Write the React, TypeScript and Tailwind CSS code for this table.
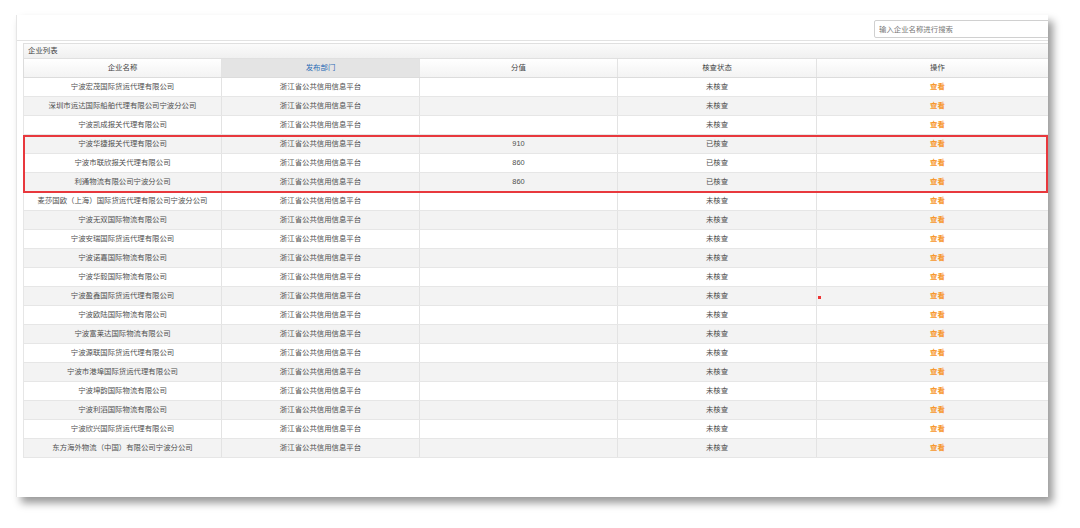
import React from 'react';

interface Company {
  name: string;
  score?: string;
  checked: boolean;
}

const companies: Company[] = [
  { name: '宁波宏茂国际货运代理有限公司', checked: false },
  { name: '深圳市运达国际船舶代理有限公司宁波分公司', checked: false },
  { name: '宁波凯成报关代理有限公司', checked: false },
  { name: '宁波华捷报关代理有限公司', score: '910', checked: true },
  { name: '宁波市联欣报关代理有限公司', score: '860', checked: true },
  { name: '利通物流有限公司宁波分公司', score: '860', checked: true },
  { name: '麦莎国欧（上海）国际货运代理有限公司宁波分公司', checked: false },
  { name: '宁波无双国际物流有限公司', checked: false },
  { name: '宁波安瑞国际货运代理有限公司', checked: false },
  { name: '宁波诺嘉国际物流有限公司', checked: false },
  { name: '宁波华毅国际物流有限公司', checked: false },
  { name: '宁波盈鑫国际货运代理有限公司', checked: false },
  { name: '宁波欧陆国际物流有限公司', checked: false },
  { name: '宁波富莱达国际物流有限公司', checked: false },
  { name: '宁波源联国际货运代理有限公司', checked: false },
  { name: '宁波市港埠国际货运代理有限公司', checked: false },
  { name: '宁波坤韵国际物流有限公司', checked: false },
  { name: '宁波利滔国际物流有限公司', checked: false },
  { name: '宁波欣兴国际货运代理有限公司', checked: false },
  { name: '东方海外物流（中国）有限公司宁波分公司', checked: false },
];

const cols = 'grid grid-cols-[198px_198px_198px_199px_242px]';
const cell = 'flex items-center justify-center border-r border-[#e3e3e3] whitespace-nowrap';

const App: React.FC = () => {
  return (
    <div
      className="w-[1080px] h-[528px] bg-white pt-[15px] pl-[16px] text-[7.4px] text-[#4f4f4f]"
      style={{ fontFamily: '"Liberation Sans", "Noto Sans CJK SC", sans-serif' }}
    >
      <div className="w-[1032px] h-[482px] bg-white flex flex-col overflow-hidden shadow-[5px_6px_8px_rgba(0,0,0,0.4)] border-l border-[#e6e6e6]">
        {/* top bar with search */}
        <div className="h-[26px] flex items-start pt-[5px] border-b border-[#e2e2e2]">
          <input
            placeholder="输入企业名称进行搜索"
            className="ml-[857px] w-[184px] h-[18px] shrink-0 border border-[#d0d0d0] rounded-[2px] px-[4px] text-[7.4px] text-[#555] placeholder:text-[#777] outline-none"
          />
        </div>

        {/* list area */}
        <div className="flex-1 flex -ml-px border-l border-[#8fcdf0] pl-[6px] pt-[2px]">
          <div className="relative w-[1040px]">
            <div className="h-[16px] flex items-center pl-[4px] bg-gradient-to-b from-[#fbfbfb] to-[#f0f0f0] border-t border-b border-l border-[#e0e0e0] text-[#444]">
              企业列表
            </div>

            <div className={`${cols} h-[19px] border-b border-l border-[#dcdcdc] bg-gradient-to-b from-white to-[#f3f3f3] text-[#444]`}>
              <div className={cell}>企业名称</div>
              <div className={`${cell} bg-[#e4e4e4] text-[#2d6cb5]`}>发布部门</div>
              <div className={cell}>分值</div>
              <div className={cell}>核查状态</div>
              <div className={cell}>操作</div>
            </div>

            {companies.map((c, i) => (
              <div
                key={c.name}
                className={`${cols} h-[19px] border-b border-l border-[#e6e6e6] ${i % 2 === 1 ? 'bg-[#f3f3f3]' : 'bg-white'}`}
              >
                <div className={cell}>{c.name}</div>
                <div className={cell}>浙江省公共信用信息平台</div>
                <div className={cell}>{c.score ?? ''}</div>
                <div className={cell}>{c.checked ? '已核查' : '未核查'}</div>
                <div className={`${cell} text-[#f7962a] font-semibold`}>查看</div>
              </div>
            ))}

            {/* highlight box over the verified rows */}
            <div className="absolute left-0 top-[92px] w-[1025px] h-[58px] border-2 border-[#e8383d] pointer-events-none" />
            {/* stray red mark */}
            <div className="absolute left-[795px] top-[253px] w-[3px] h-[3px] bg-[#ee3333]" />
          </div>
        </div>
      </div>
    </div>
  );
};

export default App;
